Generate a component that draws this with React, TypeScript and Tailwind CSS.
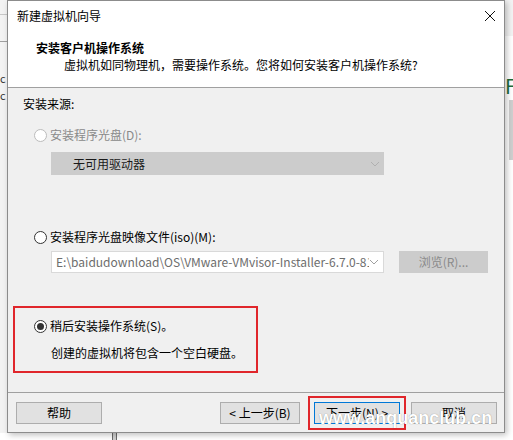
import React from 'react';

const FONT = '"Noto Sans CJK SC", "Noto Sans", sans-serif';

const Radio: React.FC<{ checked?: boolean; disabled?: boolean }> = ({ checked, disabled }) => (
    <span
        className={`w-[13px] h-[13px] rounded-full border bg-white flex items-center justify-center shrink-0 ${disabled ? 'border-[#bcbcbc]' : 'border-[#333333]'}`}
    >
        {checked && <span className="w-[7px] h-[7px] rounded-full bg-[#333333]" />}
    </span>
);

const Chevron: React.FC<{ color: string }> = ({ color }) => (
    <svg width="10" height="6" viewBox="0 0 10 6" className="shrink-0">
        <path d="M1 1 L5 5 L9 1" fill="none" stroke={color} strokeWidth="1" />
    </svg>
);

const Btn: React.FC<{ label: string; className?: string }> = ({ label, className }) => (
    <div
        className={`h-[22px] flex items-center justify-center bg-[#e1e1e1] border border-[#adadad] text-[12px] text-black ${className ?? ''}`}
    >
        {label}
    </div>
);

export default function App() {
    return (
        <div className="relative w-[513px] h-[440px] bg-[#f3f3f3] overflow-hidden" style={{ fontFamily: FONT }}>
            {/* background app behind the dialog */}
            <div className="absolute left-0 top-[14px] w-[7px] h-px bg-[#c8c8c8]" />
            <div className="absolute left-0 top-[41px] w-[7px] h-px bg-[#a0a0a0]" />
            <div className="absolute left-0 top-[73px] text-[11px] text-[#333] leading-none">c</div>
            <div className="absolute left-0 top-[90px] text-[11px] text-[#333] leading-none">c</div>
            <div className="absolute right-0 top-[36px] w-[8px] h-[404px] bg-white" />
            <div className="absolute right-0 top-[100px] w-[4px] h-[60px] bg-[#cfcfcf]" />
            <div className="absolute left-[505px] top-[76px] text-[20px] text-[#1e6b3a] leading-none">F</div>
            <div className="absolute left-0 top-[433px] w-[513px] h-[7px] bg-white" />
            <div className="absolute left-[112px] top-[432px] w-[5px] h-[8px] border-x border-[#6a6a6a] bg-[#cfcfcf]" />

            {/* dialog */}
            <div className="absolute left-[7px] top-0 w-[498px] h-[433px] flex flex-col bg-[#f0f0f0] border border-[#8c8c8c] shadow-[2px_2px_6px_rgba(0,0,0,0.25)]">
                <div className="bg-white flex flex-col">
                    <div className="h-[30px] flex items-center justify-between pl-[9px] pr-[8px]">
                        <span className="text-[12px] text-black">新建虚拟机向导</span>
                        <svg width="12" height="12" viewBox="0 0 12 12">
                            <path d="M1 1 L11 11 M11 1 L1 11" stroke="#111" strokeWidth="1" />
                        </svg>
                    </div>
                    <div className="h-[56px] flex flex-col pt-[9px]">
                        <div className="pl-[28px] text-[12px] font-bold text-black leading-[16px]">安装客户机操作系统</div>
                        <div className="pl-[56px] mt-[1px] text-[12px] text-black leading-[16px]">
                            虚拟机如同物理机，需要操作系统。您将如何安装客户机操作系统?
                        </div>
                    </div>
                </div>
                <div className="h-px bg-[#a0a0a0]" />

                <div className="h-[304px] flex flex-col text-[12px] leading-[16px]">
                    <div className="mt-[8px] pl-[15px] text-black">安装来源:</div>

                    <div className="mt-[15px] pl-[26px] flex items-center gap-[3px] text-[#8a8a8a]">
                        <Radio disabled />
                        <span>安装程序光盘(D):</span>
                    </div>
                    <div className="mt-[9px] ml-[43px] w-[333px] h-[23px] bg-[#cccccc] flex items-center justify-between pl-[22px] pr-[4px]">
                        <span className="text-[#1a1a1a]">无可用驱动器</span>
                        <Chevron color="#b0b0b0" />
                    </div>

                    <div className="mt-[54px] pl-[26px] flex items-center gap-[3px] text-black">
                        <Radio />
                        <span>安装程序光盘映像文件(iso)(M):</span>
                    </div>
                    <div className="mt-[6px] ml-[43px] flex items-center gap-[15px]">
                        <div className="w-[333px] h-[22px] bg-white border border-[#d9d9d9] flex items-center justify-between pl-[4px] pr-[4px] overflow-hidden">
                            <span className="text-[#6d6d6d] whitespace-nowrap overflow-hidden">
                                E:\baidudownload\OS\VMware-VMvisor-Installer-6.7.0-81
                            </span>
                            <Chevron color="#a0a0a0" />
                        </div>
                        <div className="w-[89px] h-[22px] bg-[#cccccc] flex items-center justify-center text-[#8a8a8a]">
                            浏览(R)...
                        </div>
                    </div>

                    <div className="mt-[33px] ml-[5px] w-[245px] h-[67px] border-2 border-[#e0262b] flex flex-col pt-[10px]">
                        <div className="pl-[19px] flex items-center gap-[3px] text-black">
                            <Radio checked />
                            <span>稍后安装操作系统(S)。</span>
                        </div>
                        <div className="mt-[11px] pl-[36px] text-black">创建的虚拟机将包含一个空白硬盘。</div>
                    </div>
                </div>

                <div className="h-px bg-[#a0a0a0]" />
                <div className="flex-1 relative flex items-start pt-[9px] pl-[8px] pr-[7px]">
                    <Btn label="帮助" className="w-[86px]" />
                    <div className="flex-1" />
                    <Btn label="< 上一步(B)" className="w-[80px]" />
                    <div className="ml-[8px] p-[4px] -mt-[6px] border-2 border-[#e0262b]">
                        <Btn label="下一步(N) >" className="w-[86px] !border-[#0078d7]" />
                    </div>
                    <Btn label="取消" className="ml-[5px] w-[86px]" />
                    <span
                        className="absolute left-[311px] top-[16px] text-[18px] font-bold text-white leading-none [text-shadow:0_0_1px_rgba(0,0,0,0.45)]"
                        style={{ fontFamily: '"Liberation Sans", Arial, sans-serif' }}
                    >
                        www.anquanclub.cn
                    </span>
                </div>
            </div>
        </div>
    );
}
